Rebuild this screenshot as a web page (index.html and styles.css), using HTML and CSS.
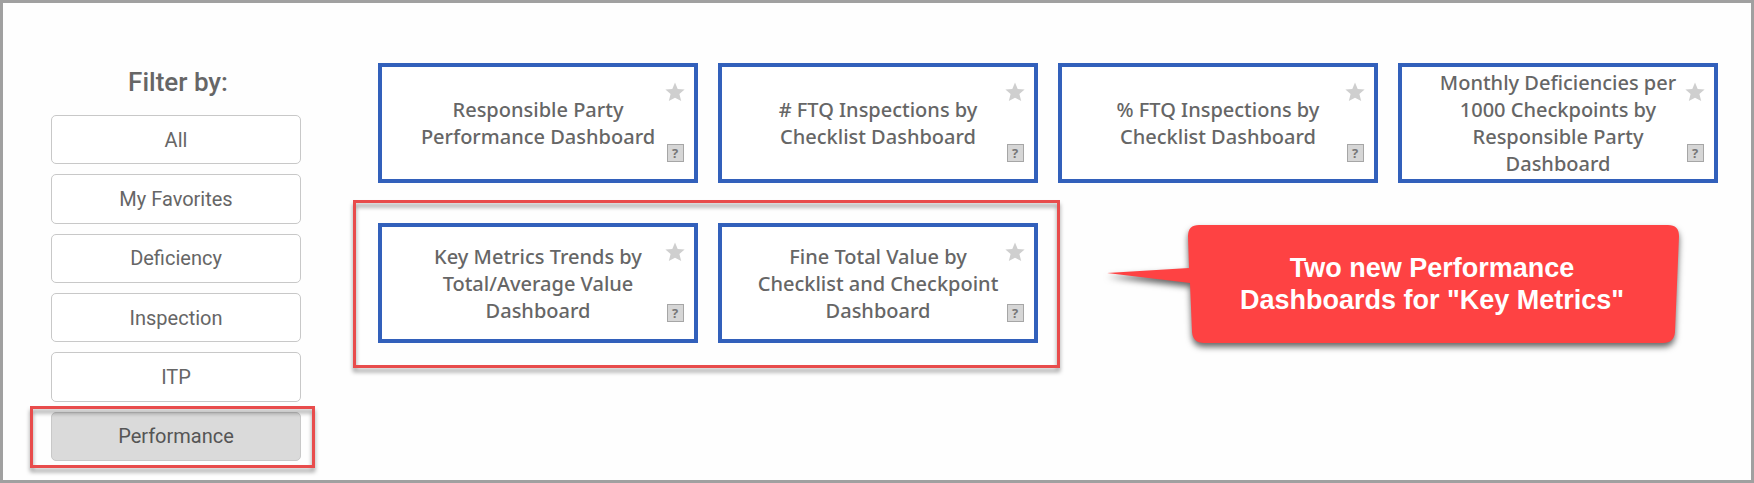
FILE: index.html
```
<!DOCTYPE html>
<html lang="en">
  <head>
    <meta charset="UTF-8" />
    <meta name="viewport" content="width=device-width, initial-scale=1.0" />
    <title>Performance Dashboards</title>
    <link rel="stylesheet" href="styles.css">
  </head>
  <body>
    <!-- Shared star shape -->
    <svg class="defs" width="0" height="0" aria-hidden="true">
      <symbol id="star" viewBox="0 0 20 20">
        <path d="M10 0.5 L12.7 7 L19.6 7.5 L14.4 12.1 L16.2 19 L10 15.7 L3.8 19 L5.6 12.1 L0.4 7.5 L7.3 7 Z" />
      </symbol>
    </svg>

    <div class="page">
      <aside class="sidebar">
        <h2>Filter by:</h2>
        <ul class="filters">
          <li><button type="button">All</button></li>
          <li><button type="button">My Favorites</button></li>
          <li><button type="button">Deficiency</button></li>
          <li><button type="button">Inspection</button></li>
          <li><button type="button">ITP</button></li>
          <li class="selected">
            <button type="button" aria-pressed="true">Performance</button>
            <span class="marker"></span>
          </li>
        </ul>
      </aside>

      <main class="dashboards">
        <div class="card">
          <a href="#">Responsible Party Performance Dashboard</a>
          <div class="tools">
            <button type="button" class="favorite" aria-label="Add to favorites"><svg><use href="#star" /></svg></button>
            <button type="button" class="help">?</button>
          </div>
        </div>
        <div class="card">
          <a href="#"># FTQ Inspections by Checklist Dashboard</a>
          <div class="tools">
            <button type="button" class="favorite" aria-label="Add to favorites"><svg><use href="#star" /></svg></button>
            <button type="button" class="help">?</button>
          </div>
        </div>
        <div class="card">
          <a href="#">% FTQ Inspections by Checklist Dashboard</a>
          <div class="tools">
            <button type="button" class="favorite" aria-label="Add to favorites"><svg><use href="#star" /></svg></button>
            <button type="button" class="help">?</button>
          </div>
        </div>
        <div class="card">
          <a href="#">Monthly Deficiencies per 1000 Checkpoints by Responsible Party Dashboard</a>
          <div class="tools">
            <button type="button" class="favorite" aria-label="Add to favorites"><svg><use href="#star" /></svg></button>
            <button type="button" class="help">?</button>
          </div>
        </div>

        <!-- New key metrics dashboards -->
        <div class="new-group">
          <div class="card">
            <a href="#">Key Metrics Trends by Total/Average Value Dashboard</a>
            <div class="tools">
              <button type="button" class="favorite" aria-label="Add to favorites"><svg><use href="#star" /></svg></button>
              <button type="button" class="help">?</button>
            </div>
          </div>
          <div class="card">
            <a href="#">Fine Total Value by Checklist and Checkpoint Dashboard</a>
            <div class="tools">
              <button type="button" class="favorite" aria-label="Add to favorites"><svg><use href="#star" /></svg></button>
              <button type="button" class="help">?</button>
            </div>
          </div>
          <span class="marker"></span>
        </div>

        <div class="callout">
          <svg class="bubble" viewBox="0 0 572 118" preserveAspectRatio="none" aria-hidden="true">
            <path d="M92 0 H561 Q572 0 572 11 L568 107 Q567 118 556 118 H97 Q86 118 85 107 L83 58 L0 48 L82 43 L81 11 Q81 0 92 0 Z" />
          </svg>
          <p>Two new Performance<br>Dashboards for "Key Metrics"</p>
        </div>
      </main>
    </div>
  </body>
</html>
```

FILE: styles.css
```
* {
  box-sizing: border-box;
}

body {
  margin: 0;
  font-family: Roboto, Arial, sans-serif;
  color: #666;
  background-color: #fefefe;
}

button {
  font-family: inherit;
  color: inherit;
  cursor: pointer;
}

.defs {
  position: absolute;
}

.page {
  display: flex;
  gap: 77px;
  min-height: 100vh;
  padding: 60px 33px 19px 48px;
  border: 3px solid #a0a0a0;
}

/* Filter list */
.sidebar {
  display: flex;
  flex-direction: column;
  flex: 0 0 250px;
}

.sidebar h2 {
  margin: 0 0 14px;
  padding-left: 4px;
  font-size: 26px;
  font-weight: 500;
  line-height: 38px;
  text-align: center;
}

.filters {
  display: flex;
  flex: 1;
  flex-direction: column;
  gap: 10px;
  margin: 0;
  padding: 0;
  list-style: none;
}

.filters li {
  display: flex;
  flex: 1;
  position: relative;
}

.filters button {
  width: 100%;
  font-size: 20px;
  background-color: #fff;
  border: 1px solid #c8c8c8;
  border-radius: 5px;
}

.filters .selected button {
  color: #555;
  background-color: #dadada;
}

/* Red frame drawn over the highlighted items */
.marker {
  position: absolute;
  border: 3px solid #e84c4c;
  filter: drop-shadow(0 4px 2px rgba(0, 0, 0, 0.4));
  pointer-events: none;
}

.selected .marker {
  inset: -6px -14px -7px -21px;
}

.new-group .marker {
  inset: -23px -22px -25px -25px;
}

/* Dashboard cards */
.dashboards {
  display: grid;
  flex: 1;
  grid-template-columns: repeat(4, 1fr);
  align-content: start;
  gap: 40px 20px;
}

.card {
  display: flex;
  position: relative;
  align-items: center;
  justify-content: center;
  min-height: 120px;
  padding: 0 34px;
  background-color: #fff;
  border: 4px solid #3260bb;
}

.card a {
  font-family: "Noto Sans", "Open Sans", sans-serif;
  font-size: 20px;
  font-weight: 500;
  line-height: 27px;
  color: #666;
  text-align: center;
  text-decoration: none;
}

.tools {
  display: flex;
  position: absolute;
  top: 15px;
  right: 9px;
  bottom: 17px;
  flex-direction: column;
  align-items: center;
  justify-content: space-between;
}

.favorite {
  padding: 0;
  background: none;
  border: none;
}

.favorite svg {
  display: block;
  width: 20px;
  height: 20px;
  fill: #cfcfcf;
}

.help {
  width: 17px;
  height: 18px;
  padding: 0;
  font-family: "Open Sans", sans-serif;
  font-size: 13px;
  font-weight: 700;
  line-height: 16px;
  color: #777;
  background-color: #d6d6d6;
  border: 1px solid #a6a6a6;
}

.new-group {
  display: grid;
  position: relative;
  grid-column: span 2;
  grid-template-columns: 1fr 1fr;
  gap: 20px;
}

/* Speech bubble */
.callout {
  display: flex;
  position: relative;
  grid-column: span 2;
  align-items: center;
  justify-content: center;
  margin: 2px 39px 0 49px;
  padding-left: 78px;
}

.bubble {
  position: absolute;
  inset: 0;
  width: 100%;
  height: 100%;
  overflow: visible;
  fill: #fe4243;
  filter: drop-shadow(0 4px 3px rgba(0, 0, 0, 0.6));
}

.callout p {
  position: relative;
  margin: 0;
  font-family: "Liberation Sans", Arial, sans-serif;
  font-size: 27px;
  font-weight: 700;
  line-height: 32px;
  color: #fff;
  text-align: center;
}
```
